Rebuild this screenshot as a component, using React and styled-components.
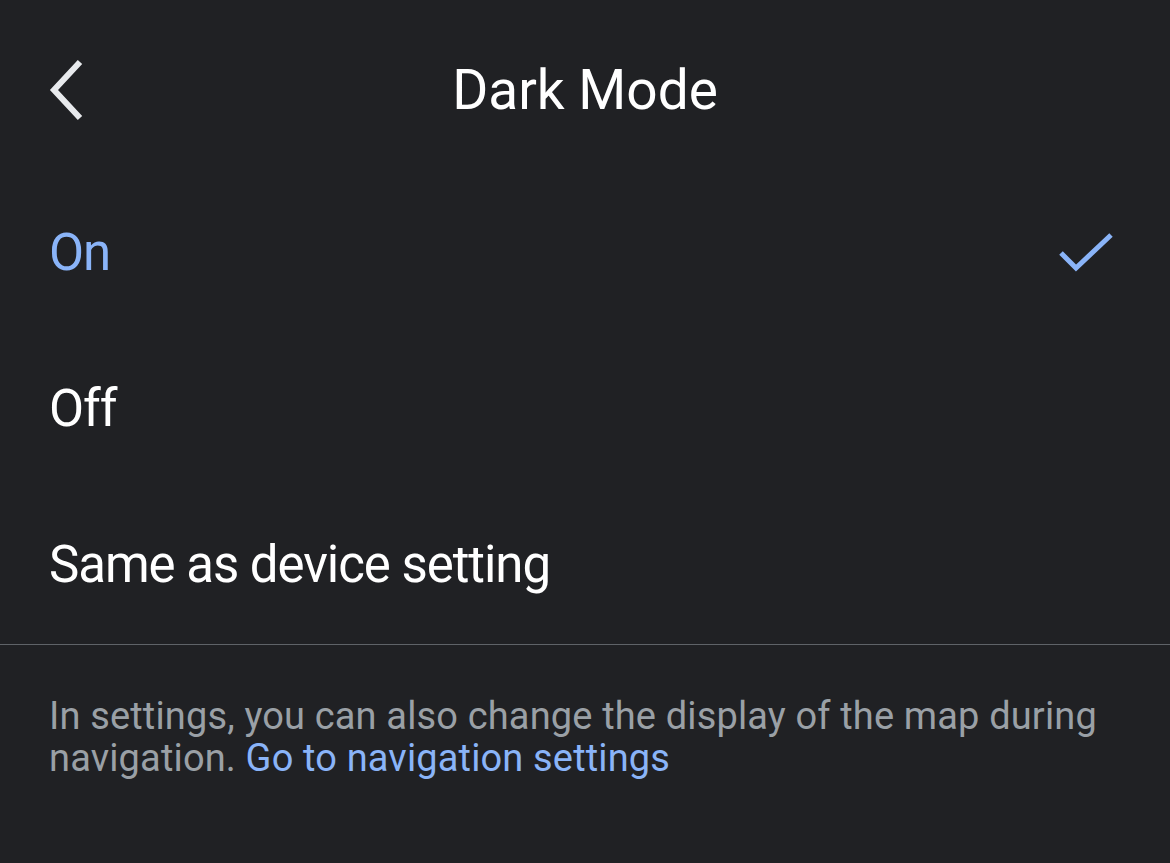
import React from 'react'
import styled, { createGlobalStyle } from 'styled-components'

const options = [
  { id: 'on', label: 'On' },
  { id: 'off', label: 'Off' },
  { id: 'device', label: 'Same as device setting' },
]

const App = () => {
  const selected = 'on'
  return (
    <>
      <GlobalStyle />
      <Page>
        <Header>
          <BackButton aria-label="Back">
            <svg width="40" height="62" viewBox="0 0 40 62" fill="none">
              <path d="M35 3 L9 31 L35 59" stroke="#e8eaed" strokeWidth="6" />
            </svg>
          </BackButton>
          <Title>Dark Mode</Title>
        </Header>
        <List>
          {options.map(item => (
            <Row key={item.id}>
              <Label selected={item.id === selected}>{item.label}</Label>
              {item.id === selected && (
                <svg width="56" height="44" viewBox="0 0 56 44" fill="none">
                  <path d="M3 22 L18 37 L53 4" stroke="#8ab4f8" strokeWidth="5" />
                </svg>
              )}
            </Row>
          ))}
        </List>
        <Note>
          In settings, you can also change the display of the map during
          navigation. <Link>Go to navigation settings</Link>
        </Note>
      </Page>
    </>
  )
}

const GlobalStyle = createGlobalStyle`
  body {
    margin: 0;
    background: #202124;
    font-family: Roboto, "Noto Sans", sans-serif;
  }
`

const Page = styled.div`
  width: 1170px;
  height: 863px;
  background: #202124;
  color: #fff;
`

const Header = styled.div`
  position: relative;
  height: 176px;
  display: flex;
  align-items: center;
  justify-content: center;
  padding-top: 4px;
  box-sizing: border-box;
`

const BackButton = styled.div`
  position: absolute;
  left: 45px;
  top: 59px;
  display: flex;
`

const Title = styled.div`
  font-size: 55px;
  font-weight: 400;
  color: #fff;
`

const List = styled.div`
  border-bottom: 1px solid #5f6368;
`

const Row = styled.div`
  height: 156px;
  display: flex;
  align-items: center;
  justify-content: space-between;
  padding: 0 56px 3px 49px;
  box-sizing: border-box;
`

const Label = styled.span`
  font-size: 51px;
  letter-spacing: -1.05px;
  color: ${props => (props.selected ? '#8ab4f8' : '#fff')};
`

const Note = styled.p`
  margin: 0;
  padding: 50px 50px 0 49px;
  font-size: 38px;
  line-height: 42px;
  letter-spacing: 0.15px;
  color: #9aa0a6;
`

const Link = styled.span`
  color: #8ab4f8;
`

export default App
